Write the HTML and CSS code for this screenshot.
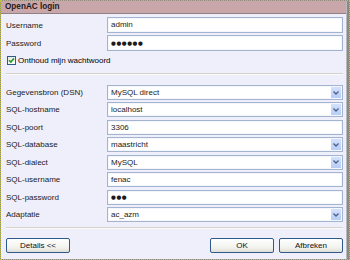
FILE: index.html
```html
<!DOCTYPE html>
<html>
<head>
<meta charset="utf-8">
<link rel="stylesheet" href="styles.css">
</head>
<body>
<div class="frame">
  <div class="dialog">
    <div class="title">OpenAC login</div>
    <div class="content">
      <div class="form">
        <span class="label">Username</span>
        <div class="field">admin</div>
        <span class="label">Password</span>
        <div class="field pw">●●●●●●</div>
      </div>
      <div class="check">
        <span class="box"><svg width="7" height="7" viewBox="0 0 7 7"><path d="M1 3.2 L2.8 5 L6 1.4" fill="none" stroke="#21a121" stroke-width="1.6"/></svg></span>
        <span>Onthoud mijn wachtwoord</span>
      </div>
      <div class="sep"></div>
      <div class="form details">
        <span class="label">Gegevensbron (DSN)</span>
        <div class="field select">MySQL direct<span class="arrow"><svg width="6" height="4" viewBox="0 0 6 4"><path d="M0.5 0.5 L3 3 L5.5 0.5" fill="none" stroke="#4c5f86" stroke-width="1.3"/></svg></span></div>
        <span class="label">SQL-hostname</span>
        <div class="field select">localhost<span class="arrow"><svg width="6" height="4" viewBox="0 0 6 4"><path d="M0.5 0.5 L3 3 L5.5 0.5" fill="none" stroke="#4c5f86" stroke-width="1.3"/></svg></span></div>
        <span class="label">SQL-poort</span>
        <div class="field">3306</div>
        <span class="label">SQL-database</span>
        <div class="field select">maastricht<span class="arrow"><svg width="6" height="4" viewBox="0 0 6 4"><path d="M0.5 0.5 L3 3 L5.5 0.5" fill="none" stroke="#4c5f86" stroke-width="1.3"/></svg></span></div>
        <span class="label">SQL-dialect</span>
        <div class="field select">MySQL<span class="arrow"><svg width="6" height="4" viewBox="0 0 6 4"><path d="M0.5 0.5 L3 3 L5.5 0.5" fill="none" stroke="#4c5f86" stroke-width="1.3"/></svg></span></div>
        <span class="label">SQL-username</span>
        <div class="field">fenac</div>
        <span class="label">SQL-password</span>
        <div class="field pw">●●●</div>
        <span class="label">Adaptatie</span>
        <div class="field select">ac_azm<span class="arrow"><svg width="6" height="4" viewBox="0 0 6 4"><path d="M0.5 0.5 L3 3 L5.5 0.5" fill="none" stroke="#4c5f86" stroke-width="1.3"/></svg></span></div>
      </div>
      <div class="sep sep2"></div>
      <div class="buttons">
        <button class="btn">Details &lt;&lt;</button>
        <span class="spacer"></span>
        <button class="btn">OK</button>
        <button class="btn">Afbreken</button>
      </div>
    </div>
  </div>
</div>
</body>
</html>
```
FILE: styles.css
```css
html, body {
  margin: 0;
  padding: 0;
  background: #ffffff;
}
body {
  font-family: "Liberation Sans", Arial, sans-serif;
  font-size: 8px;
  color: #000;
}
.frame {
  width: 350px;
  height: 260px;
  box-sizing: border-box;
  border: 1px dotted #c4c43c;
  background: #8c8c78;
  display: flex;
  padding: 0 2px 0 0;
}
.dialog {
  flex: 1;
  display: flex;
  flex-direction: column;
  background: #efeffb;
  border-right: 1px solid #b9b9c4;
}
.title {
  height: 12px;
  line-height: 12px;
  background: #c9a6a9;
  border-bottom: 1px solid #8d8284;
  font-weight: bold;
  color: #1e1a1a;
  padding-left: 4px;
  font-size: 8.2px;
}
.content {
  padding: 3px 3px 0 5px;
  display: flex;
  flex-direction: column;
}
.form {
  display: grid;
  grid-template-columns: 101px 1fr;
  row-gap: 2px;
  align-items: center;
}
.form.details {
  row-gap: 2.45px;
}
.label {
  color: #1a1a1a;
}
.field {
  height: 15px;
  box-sizing: border-box;
  border: 1px solid #a2b4d0;
  background: #fff;
  padding-left: 3px;
  line-height: 13px;
  position: relative;
  box-shadow: inset 0 0 0 1px #f4f6fb;
  color: #1a1a1a;
}
.form:not(.details) .field {
  height: 16px;
  line-height: 14px;
}
.pw {
  font-family: "DejaVu Sans", sans-serif;
  font-size: 5.5px;
  letter-spacing: 0.6px;
}
.arrow {
  position: absolute;
  right: 1px;
  top: 1px;
  bottom: 1px;
  width: 10px;
  background: linear-gradient(#d3e1fc, #b7cdf6);
  display: flex;
  align-items: center;
  justify-content: center;
}
.check {
  display: flex;
  align-items: center;
  gap: 2px;
  margin-top: 4px;
  height: 11px;
}
.box {
  width: 7px;
  height: 7px;
  border: 1px solid #2a5b8a;
  background: linear-gradient(135deg, #e6e6de, #fff);
  display: flex;
  align-items: center;
  justify-content: center;
  margin-left: 1px;
}
.sep {
  height: 1px;
  background: #d6d2c9;
  border-bottom: 1px solid #fbfbfd;
  margin: 7px 0 10px 0;
}
.sep2 {
  margin: 5px 0 9px 0;
}
.buttons {
  display: flex;
  gap: 5px;
}
.spacer {
  flex: 1;
}
.btn {
  width: 64px;
  height: 15px;
  padding: 0;
  font-family: "Liberation Sans", Arial, sans-serif;
  font-size: 8px;
  color: #111;
  border: 1px solid #2e5a8c;
  border-radius: 2px;
  background: linear-gradient(#ffffff, #f1f1ec 70%, #dedcd4);
}
```
